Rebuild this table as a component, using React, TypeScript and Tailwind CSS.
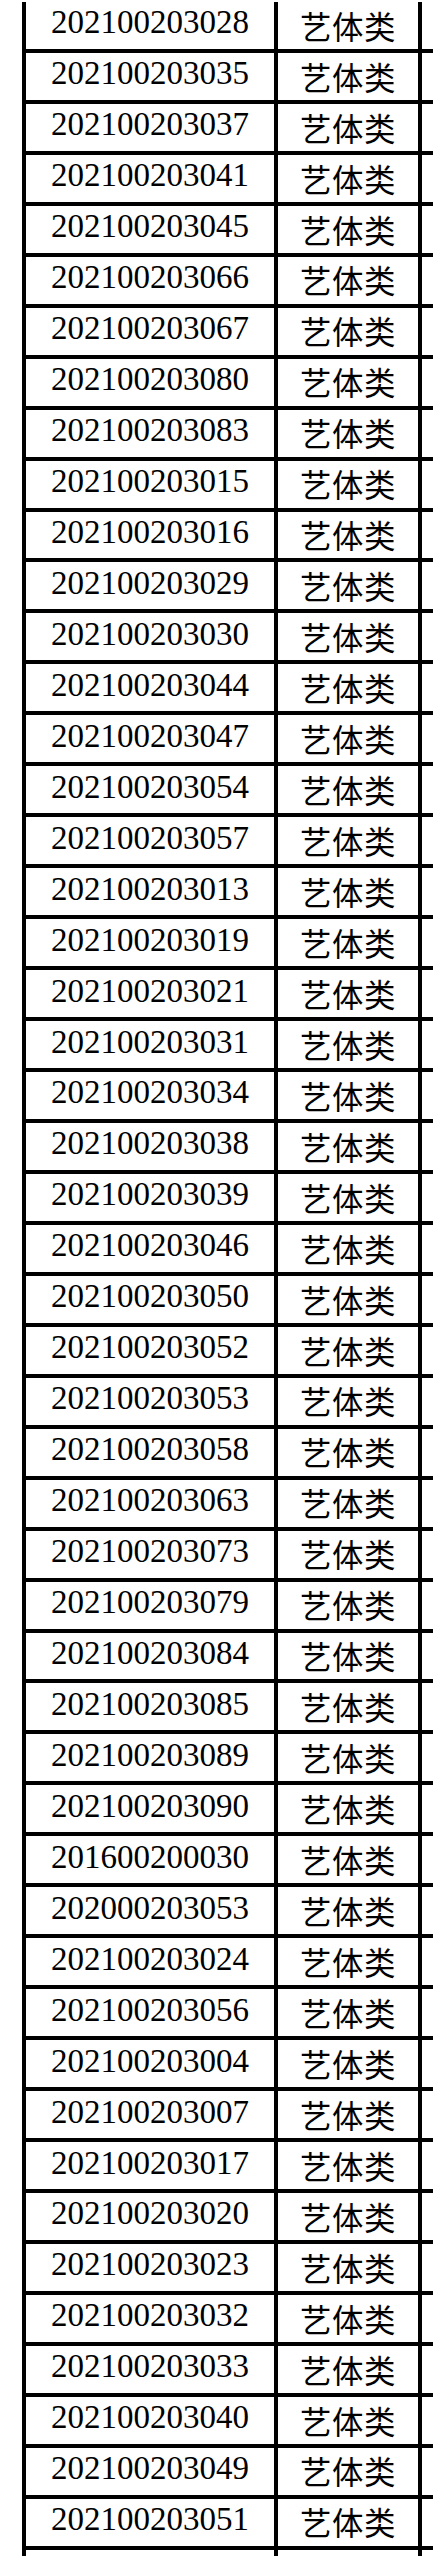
import React from 'react';

const ids = [
  '202100203028', '202100203035', '202100203037', '202100203041', '202100203045',
  '202100203066', '202100203067', '202100203080', '202100203083', '202100203015',
  '202100203016', '202100203029', '202100203030', '202100203044', '202100203047',
  '202100203054', '202100203057', '202100203013', '202100203019', '202100203021',
  '202100203031', '202100203034', '202100203038', '202100203039', '202100203046',
  '202100203050', '202100203052', '202100203053', '202100203058', '202100203063',
  '202100203073', '202100203079', '202100203084', '202100203085', '202100203089',
  '202100203090', '201600200030', '202000203053', '202100203024', '202100203056',
  '202100203004', '202100203007', '202100203017', '202100203020', '202100203023',
  '202100203032', '202100203033', '202100203040', '202100203049', '202100203051',
];

function Row({ id }: { id?: string }) {
  return (
    <div className="flex h-[50.96px] border-b-4 border-black">
      <div className="flex w-[252px] items-center justify-center border-l-4 border-black pb-[5px] text-[33px] leading-none text-black font-['Liberation_Serif',serif]">
        {id}
      </div>
      <div className="flex w-[148px] items-center justify-center border-x-4 border-black text-[31.5px] leading-none tracking-[0.5px] text-black font-['Noto_Sans_CJK_SC',sans-serif]">
        {id ? '艺体类' : ''}
      </div>
    </div>
  );
}

export default function App() {
  return (
    <div className="h-[2556px] w-[433px] overflow-hidden bg-white pl-[22px] pt-[2px]">
      {ids.map((id) => (
        <Row key={id} id={id} />
      ))}
      <Row />
    </div>
  );
}
